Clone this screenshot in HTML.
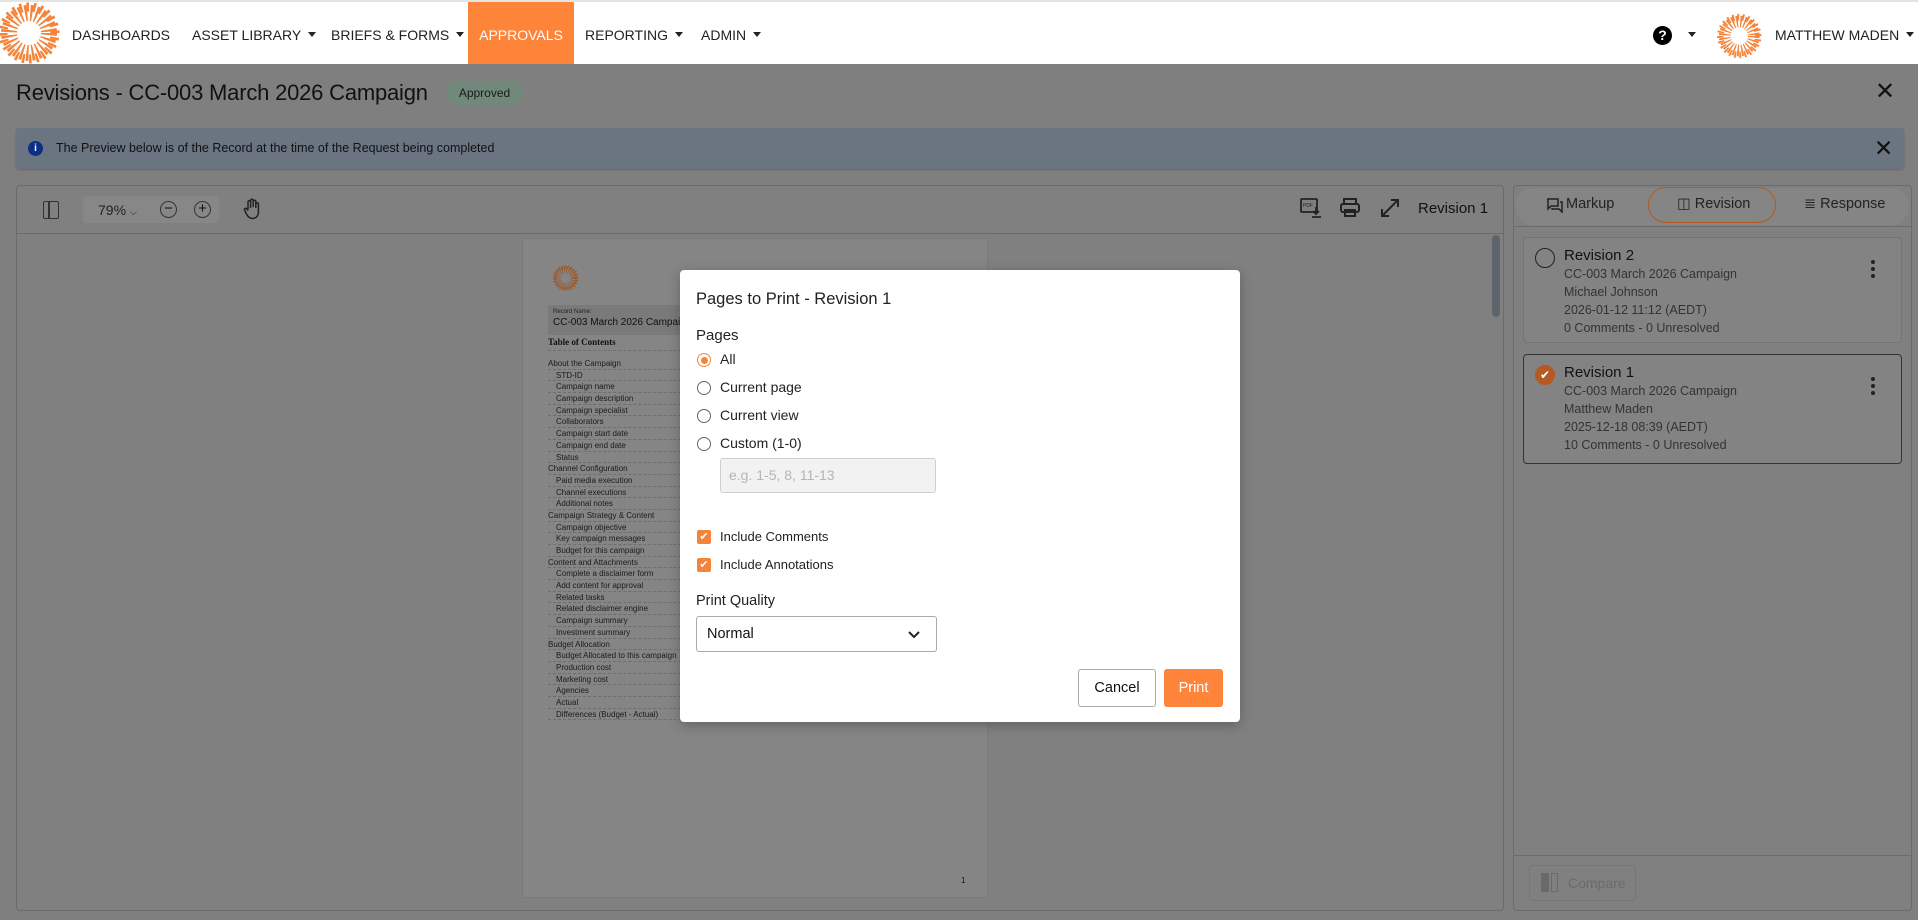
<!DOCTYPE html>
<html><head><meta charset="utf-8"><style>
*{box-sizing:border-box;margin:0;padding:0}
body{width:1918px;height:920px;overflow:hidden;font-family:"Liberation Sans",sans-serif;background:#7f7f7f;position:relative;color:#111}
.abs{position:absolute;white-space:nowrap}
.nav{left:0;top:0;width:1918px;height:64px;background:#fff;border-top:2px solid #e4e4e4}
.nav .it{position:absolute;top:0;height:62px;line-height:66px;font-size:14px;color:#222;white-space:nowrap}
.caret{display:inline-block;width:0;height:0;border-left:4px solid transparent;border-right:4px solid transparent;border-top:5px solid #222;margin-left:7px;vertical-align:3px}
.panel{background:#808080;border:1px solid #6b6b6b;border-radius:4px}
.toc div{height:11.7px;border-bottom:1px dashed #6e6e6e;font-size:8px;line-height:11px;color:#1a1a1a;white-space:nowrap}
.toc .s{padding-left:8px}
.card{background:#838383;border:1px solid #747474;border-radius:4px;position:absolute;left:1523px;width:379px}
.card .t{position:absolute;left:40px;top:9px;font-size:15px;color:#111}
.card .l{position:absolute;left:40px;font-size:12.5px;color:#333;white-space:nowrap}
.dots{position:absolute;right:26px;top:22px;width:4px}
.dots i{display:block;width:4px;height:4px;border-radius:2px;background:#222;margin-bottom:3px}
.modal{left:680px;top:270px;width:560px;height:452px;background:#fff;border-radius:4px;box-shadow:0 3px 12px rgba(0,0,0,.25)}
.modal .x{position:absolute;font-size:14px;color:#222;white-space:nowrap}
.rad{position:absolute;left:17px;width:14px;height:14px;border:1px solid #666;border-radius:50%}
.cb{position:absolute;left:17px;width:14px;height:14px;background:#f5843b;border-radius:2px}
</style></head><body>
<div class="abs nav">
<svg class="abs" style="left:-1px;top:-2px" width="62" height="66" viewBox="0 0 62 66"><g fill="none" stroke="#f5843b"><circle cx="30" cy="33" r="20" stroke-width="16" stroke-dasharray="2.2 3.1"/><circle cx="30" cy="33" r="26" stroke-width="9" stroke-dasharray="2.4 4.4" stroke-dashoffset="2.5"/></g></svg>
<div class="it" style="left:72px">DASHBOARDS</div>
<div class="it" style="left:192px">ASSET LIBRARY<span class="caret"></span></div>
<div class="it" style="left:331px">BRIEFS &amp; FORMS<span class="caret"></span></div>
<div class="it" style="left:468px;width:106px;background:#fe8439;color:#fff;text-align:center">APPROVALS</div>
<div class="it" style="left:585px">REPORTING<span class="caret"></span></div>
<div class="it" style="left:701px">ADMIN<span class="caret"></span></div>
<div class="abs" style="left:1653px;top:24px;width:19px;height:19px;border-radius:50%;background:#000;color:#fff;font-size:14px;font-weight:bold;text-align:center;line-height:19px">?</div>
<span class="caret abs" style="left:1681px;top:30px"></span>
<svg class="abs" style="left:1716px;top:10px" width="48" height="48" viewBox="0 0 62 66"><g fill="none" stroke="#f5843b"><circle cx="30" cy="33" r="20" stroke-width="16" stroke-dasharray="2.2 3.1"/><circle cx="30" cy="33" r="26" stroke-width="9" stroke-dasharray="2.4 4.4" stroke-dashoffset="2.5"/></g></svg>
<div class="it" style="left:1775px">MATTHEW MADEN<span class="caret"></span></div>
</div>

<div class="abs" style="left:16px;top:80px;font-size:22px;color:#111;letter-spacing:-.2px">Revisions - CC-003 March 2026 Campaign</div>
<div class="abs" style="left:446px;top:81px;width:77px;height:24px;border-radius:12px;background:#71897a;font-size:12px;line-height:24px;text-align:center;color:#1b1b1b">Approved</div>
<div class="abs" style="left:1875px;top:80px;font-size:24px;color:#111;line-height:24px">✕</div>

<div class="abs" style="left:16px;top:128px;width:1888px;height:41px;background:#6b7582;border-radius:3px;box-shadow:0 1px 2px rgba(0,0,0,.2)"></div>
<div class="abs" style="left:28px;top:141px;width:15px;height:15px;border-radius:50%;background:#0b2f87;color:#fff;font-size:10px;font-weight:bold;text-align:center;line-height:15px">i</div>
<div class="abs" style="left:56px;top:141px;font-size:12.5px;color:#111">The Preview below is of the Record at the time of the Request being completed</div>
<div class="abs" style="left:1874px;top:136px;font-size:23px;color:#111;line-height:24px">✕</div>

<div class="abs panel" style="left:16px;top:185px;width:1488px;height:726px"></div>
<div class="abs" style="left:17px;top:233px;width:1486px;height:1px;background:#6b6b6b"></div>
<div class="abs" style="left:43px;top:201px;width:16px;height:18px;border:1.6px solid #333;border-radius:2px"></div>
<div class="abs" style="left:48px;top:201px;width:1.6px;height:18px;background:#333"></div>
<div class="abs" style="left:83px;top:196px;width:136px;height:27px;background:#878787;border-radius:3px"></div>
<div class="abs" style="left:98px;top:202px;font-size:14px;color:#222">79%<span style="font-size:9px;margin-left:4px">⌵</span></div>
<div class="abs" style="left:160px;top:201px;width:17px;height:17px;border:1.5px solid #333;border-radius:50%;text-align:center;line-height:13px;font-size:15px">−</div>
<div class="abs" style="left:194px;top:201px;width:17px;height:17px;border:1.5px solid #333;border-radius:50%;text-align:center;line-height:14px;font-size:15px">+</div>
<svg class="abs" style="left:242px;top:198px" width="20" height="22" viewBox="0 0 20 22" fill="none" stroke="#222" stroke-width="1.5"><path d="M6 12V4a1.3 1.3 0 0 1 2.6 0v6M8.6 9V2.5a1.3 1.3 0 0 1 2.6 0V9M11.2 9V3.5a1.3 1.3 0 0 1 2.6 0V10M13.8 10V6a1.3 1.3 0 0 1 2.6 0v8c0 4-2.5 6.5-6 6.5-3 0-4.5-2-6-4.5L2.5 12a1.3 1.3 0 0 1 2.2-1.3L6 12.5"/></svg>
<svg class="abs" style="left:1299px;top:196px" width="24" height="24" viewBox="0 0 24 24" fill="none" stroke="#222" stroke-width="1.8"><rect x="2" y="3" width="16" height="13" rx="1"/><path d="M17 11v7M14 15l3 3 3-3M13 21h9"/><text x="4" y="11" font-size="5" fill="#222" stroke="none" font-family="Liberation Sans">PDF</text></svg>
<svg class="abs" style="left:1339px;top:197px" width="22" height="22" viewBox="0 0 22 22" fill="none" stroke="#222" stroke-width="2"><rect x="5" y="2" width="12" height="5"/><rect x="2" y="7" width="18" height="8" rx="2"/><rect x="6" y="13" width="10" height="6"/></svg>
<svg class="abs" style="left:1379px;top:197px" width="22" height="22" viewBox="0 0 22 22" fill="none" stroke="#222" stroke-width="2"><path d="M3 19L19 3M12 3h7v7M3 12v7h7"/></svg>
<div class="abs" style="left:1418px;top:200px;font-size:15px;color:#111">Revision 1</div>
<div class="abs" style="left:1492px;top:235px;width:8px;height:82px;background:#5d646c;border-radius:4px"></div>

<div class="abs" style="left:522px;top:238px;width:466px;height:660px;background:#858585;border:1px solid #7a7a7a"></div>
<svg class="abs" style="left:552px;top:264px" width="28" height="28" viewBox="0 0 62 66"><g fill="none" stroke="#9a5a2c"><circle cx="30" cy="33" r="20" stroke-width="16" stroke-dasharray="2.2 3.1"/><circle cx="30" cy="33" r="26" stroke-width="9" stroke-dasharray="2.4 4.4" stroke-dashoffset="2.5"/></g></svg>
<div class="abs" style="left:548px;top:305px;width:200px;height:30px;background:#7a7a7a"></div>
<div class="abs" style="left:553px;top:309px;font-size:6px;color:#222">Record Name:</div>
<div class="abs" style="left:553px;top:317px;font-size:10px;color:#111">CC-003 March 2026 Campaign</div>
<div class="abs" style="left:548px;top:337px;width:420px;font-family:'Liberation Serif',serif;font-weight:bold;font-size:9px;height:14px;border-bottom:1px dashed #6e6e6e;color:#111">Table of Contents</div>
<div class="abs toc" style="left:548px;top:358px;width:420px">
<div>About the Campaign</div><div class="s">STD-ID</div><div class="s">Campaign name</div><div class="s">Campaign description</div><div class="s">Campaign specialist</div><div class="s">Collaborators</div><div class="s">Campaign start date</div><div class="s">Campaign end date</div><div class="s">Status</div>
<div>Channel Configuration</div><div class="s">Paid media execution</div><div class="s">Channel executions</div><div class="s">Additional notes</div>
<div>Campaign Strategy &amp; Content</div><div class="s">Campaign objective</div><div class="s">Key campaign messages</div><div class="s">Budget for this campaign</div>
<div>Content and Attachments</div><div class="s">Complete a disclaimer form</div><div class="s">Add content for approval</div><div class="s">Related tasks</div><div class="s">Related disclaimer engine</div><div class="s">Campaign summary</div><div class="s">Investment summary</div>
<div>Budget Allocation</div><div class="s">Budget Allocated to this campaign</div><div class="s">Production cost</div><div class="s">Marketing cost</div><div class="s">Agencies</div><div class="s">Actual</div><div class="s">Differences (Budget - Actual)</div>
</div>
<div class="abs" style="left:961px;top:876px;font-size:8px;color:#111">1</div>

<div class="abs panel" style="left:1513px;top:185px;width:399px;height:726px"></div>
<div class="abs" style="left:1516px;top:188px;width:393px;height:37px;background:#858585;border-radius:18px"></div>
<div class="abs" style="left:1514px;top:226px;width:397px;height:1px;background:#6b6b6b"></div>
<div class="abs" style="left:1648px;top:187px;width:128px;height:36px;border:1.5px solid #b45a22;border-radius:18px"></div>
<svg class="abs" style="left:1546px;top:198px" width="17" height="15" viewBox="0 0 17 15" fill="none" stroke="#222" stroke-width="1.5"><path d="M1 1h11v7H5L2 11V1zM14 4h2v10l-3-3H6v-1"/></svg>
<div class="abs" style="left:1566px;top:196px;font-size:14.5px;color:#222">Markup</div>
<div class="abs" style="left:1677px;top:196px;font-size:14.5px;color:#222">◫ Revision</div>
<div class="abs" style="left:1804px;top:196px;font-size:14.5px;color:#222">≣ Response</div>
<div class="card" style="top:237px;height:106px"><div class="abs" style="left:11px;top:10px;width:20px;height:20px;border:1.5px solid #222;border-radius:50%"></div>
<div class="t">Revision 2</div><div class="l" style="top:29px">CC-003 March 2026 Campaign</div><div class="l" style="top:47px">Michael Johnson</div><div class="l" style="top:65px">2026-01-12 11:12 (AEDT)</div><div class="l" style="top:83px">0 Comments - 0 Unresolved</div><div class="dots"><i></i><i></i><i></i></div></div>
<div class="card" style="top:354px;height:110px;border:1.5px solid #333"><div class="abs" style="left:11px;top:10px;width:20px;height:20px;background:#b45a22;border-radius:50%;color:#fff;font-size:12px;text-align:center;line-height:20px">✔</div>
<div class="t">Revision 1</div><div class="l" style="top:29px">CC-003 March 2026 Campaign</div><div class="l" style="top:47px">Matthew Maden</div><div class="l" style="top:65px">2025-12-18 08:39 (AEDT)</div><div class="l" style="top:83px">10 Comments - 0 Unresolved</div><div class="dots"><i></i><i></i><i></i></div></div>
<div class="abs" style="left:1514px;top:855px;width:397px;height:1px;background:#6b6b6b"></div>
<div class="abs" style="left:1529px;top:865px;width:107px;height:36px;border:1px solid #767676;border-radius:4px;font-size:14px;color:#6a6a6a;line-height:34px;padding-left:38px">Compare</div>
<div class="abs" style="left:1541px;top:873px;width:8px;height:19px;background:#6a6a6a"></div>
<div class="abs" style="left:1551px;top:873px;width:7px;height:19px;border:1.5px solid #6a6a6a"></div>

<div class="abs modal">
<div class="x" style="left:16px;top:20px;font-size:16.5px">Pages to Print - Revision 1</div>
<div class="x" style="left:16px;top:57px;font-size:15px">Pages</div>
<div class="rad" style="top:83px;border-color:#f5843b"><div style="margin:2.5px;width:7px;height:7px;border-radius:50%;background:#f5843b"></div></div>
<div class="x" style="left:40px;top:81px;font-size:14px">All</div>
<div class="rad" style="top:111px"></div><div class="x" style="left:40px;top:109px;font-size:14px">Current page</div>
<div class="rad" style="top:139px"></div><div class="x" style="left:40px;top:137px;font-size:14px">Current view</div>
<div class="rad" style="top:167px"></div><div class="x" style="left:40px;top:165px;font-size:14px">Custom (1-0)</div>
<div class="abs" style="left:40px;top:188px;width:216px;height:35px;background:#f2f2f2;border:1px solid #cfcfcf;border-radius:3px;font-size:14px;color:#b5b5b5;line-height:33px;padding-left:8px">e.g. 1-5, 8, 11-13</div>
<div class="cb" style="top:260px;color:#fff;font-size:11px;text-align:center;line-height:14px">✔</div><div class="x" style="left:40px;top:259px;font-size:13px">Include Comments</div>
<div class="cb" style="top:288px;color:#fff;font-size:11px;text-align:center;line-height:14px">✔</div><div class="x" style="left:40px;top:287px;font-size:13px">Include Annotations</div>
<div class="x" style="left:16px;top:323px;font-size:14.5px">Print Quality</div>
<div class="abs" style="left:16px;top:346px;width:241px;height:36px;border:1px solid #aaa;border-radius:3px;font-size:14.5px;line-height:34px;padding-left:10px">Normal</div>
<svg class="abs" style="left:227px;top:360px" width="14" height="9" viewBox="0 0 14 9"><path d="M2 2l5 5 5-5" fill="none" stroke="#222" stroke-width="2"/></svg>
<div class="abs" style="left:398px;top:399px;width:78px;height:38px;border:1px solid #aaa;border-radius:3px;font-size:14.5px;line-height:36px;text-align:center">Cancel</div>
<div class="abs" style="left:484px;top:399px;width:59px;height:38px;background:#fe8439;border-radius:3px;font-size:14.5px;line-height:38px;text-align:center;color:#fff">Print</div>
</div>
</body></html>
